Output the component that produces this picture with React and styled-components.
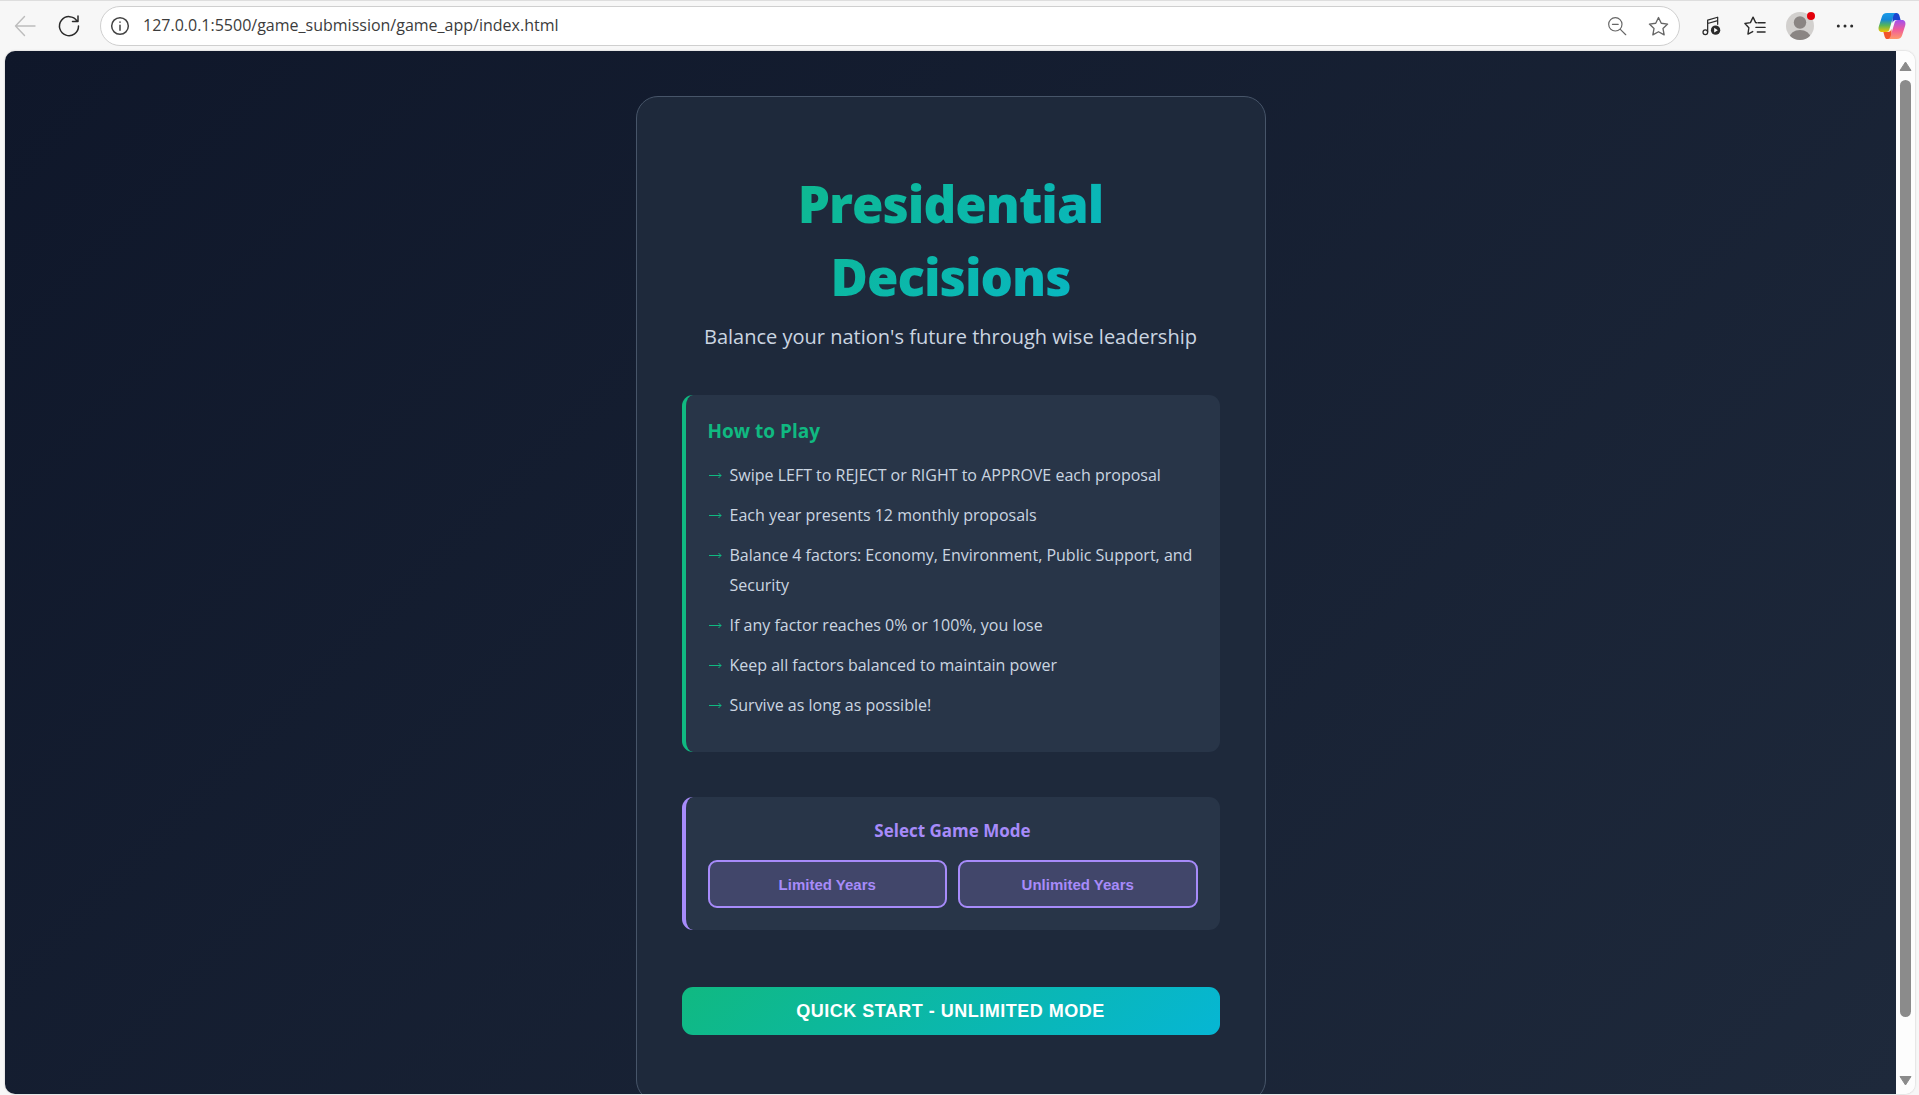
import React from "react";
import styled, { createGlobalStyle } from "styled-components";

const ui = '"Open Sans", "Noto Sans", sans-serif';
const btn = '"Liberation Sans", Arial, sans-serif';

const Global = createGlobalStyle`
  * { box-sizing: border-box; }
  body { margin: 0; background: #f7f7f7; font-family: ${ui}; }
  h1, h2, p, ul { margin: 0; padding: 0; }
`;

const Browser = styled.div`
  height: 100vh;
  display: flex;
  flex-direction: column;
  background: #f7f7f7;
`;

const Toolbar = styled.header`
  display: flex;
  align-items: center;
  height: 51px;
  padding: 0 2px 0 4px;
  border-top: 1px solid #dedede;
  flex: none;
`;

const IconButton = styled.button`
  width: ${(p) => p.$w || 44}px;
  height: 40px;
  padding: 0;
  border: 0;
  background: none;
  display: grid;
  place-items: center;
  flex: none;
  color: ${(p) => p.$color || "#2b2b2b"};
`;

const AddressBar = styled.form`
  flex: 1;
  height: 40px;
  display: flex;
  align-items: center;
  margin: 0 9px 0 8px;
  border: 1px solid #cfcfcf;
  border-radius: 20px;
  background: #fff;
`;

const UrlInput = styled.input`
  flex: 1;
  min-width: 0;
  border: 0;
  outline: 0;
  padding: 0 0 2px 4px;
  background: none;
  font: 16px ${ui};
  color: #3c3c3c;
`;

const Frame = styled.div`
  flex: 1;
  min-height: 0;
  display: flex;
  margin: 0 4px 1px 5px;
  border-radius: 10px;
  overflow: hidden;
  background: #fff;
  box-shadow: 0 0 2px #bbb;
`;

const Page = styled.main`
  flex: 1;
  min-width: 0;
  overflow: hidden;
  display: flex;
  justify-content: center;
  align-items: flex-start;
  padding: 45px 16px;
  background: linear-gradient(135deg, #0f172a 0%, #1e293b 100%);
`;

const ScrollTrack = styled.div`
  width: 19px;
  flex: none;
  display: flex;
  flex-direction: column;
  align-items: center;
  justify-content: space-between;
  padding: 10px 0 8px;
  background: #fdfdfd;
`;

const ScrollThumb = styled.div`
  flex: 1;
  width: 11px;
  margin: 8px 0 58px;
  border-radius: 6px;
  background: #8b8b8b;
`;

const Card = styled.section`
  width: 100%;
  max-width: 630px;
  flex: none;
  padding: 70px 45px 66px;
  border: 1px solid #475569;
  border-radius: 22px;
  background: #1e293b;
`;

const Title = styled.h1`
  font-size: 51px;
  line-height: 73px;
  font-weight: 800;
  letter-spacing: -1px;
  text-align: center;
  color: transparent;
  background: linear-gradient(135deg, #10b981, #06b6d4);
  background-clip: text;
  -webkit-background-clip: text;
`;

const Subtitle = styled.p`
  margin: 5px 0 39px;
  font-size: 20px;
  line-height: 38px;
  text-align: center;
  color: #cbd5e1;
`;

const Panel = styled.section`
  padding: 22px;
  border-left: 4px solid ${(p) => p.$accent};
  border-radius: 11px;
  background: #283548;
  margin-bottom: ${(p) => p.$gap}px;
`;

const PanelTitle = styled.h2`
  font-size: ${(p) => p.$size}px;
  line-height: ${(p) => p.$line}px;
  font-weight: 700;
  color: ${(p) => p.$color};
  text-align: ${(p) => p.$align || "left"};
  margin-bottom: ${(p) => p.$gap}px;
`;

const Rules = styled.ul`
  list-style: none;
  && { padding-bottom: 5px; }
`;

const Rule = styled.li`
  display: flex;
  gap: 8px;
  padding: 5px 0;
  font-size: 16px;
  line-height: 30px;
  color: #cbd5e1;
`;

const Arrow = styled.span`
  width: 14px;
  flex: none;
  display: flex;
  align-items: center;
  height: 30px;
  color: #10b981;
`;

const Modes = styled.div`
  display: grid;
  grid-template-columns: 1fr 1fr;
  gap: 11px;
`;

const ModeButton = styled.button`
  height: 48px;
  border: 2px solid #a78bfa;
  border-radius: 9px;
  background: #41466a;
  color: #a78bfa;
  font: 700 15px ${btn};
`;

const StartButton = styled.button`
  display: block;
  width: 100%;
  height: 48px;
  border: 0;
  border-radius: 11px;
  background: linear-gradient(135deg, #10b981, #06b6d4);
  color: #fff;
  font: 700 18px ${btn};
  letter-spacing: 0.5px;
  text-transform: uppercase;
`;

const Svg = ({ size = 24, children, ...rest }) => (
  <svg width={size} height={size} viewBox="0 0 24 24" fill="none" stroke="currentColor"
    strokeWidth="1.4" strokeLinecap="round" strokeLinejoin="round" aria-hidden="true" {...rest}>
    {children}
  </svg>
);

const star = "M12 2.6l2.9 6 6.6 .9-4.8 4.6 1.2 6.6-5.9-3.2-5.9 3.2 1.2-6.6L2.5 9.5l6.600-.9z";

const RULES = [
  "Swipe LEFT to REJECT or RIGHT to APPROVE each proposal",
  "Each year presents 12 monthly proposals",
  "Balance 4 factors: Economy, Environment, Public Support, and Security",
  "If any factor reaches 0% or 100%, you lose",
  "Keep all factors balanced to maintain power",
  "Survive as long as possible!",
];

function CopilotLogo() {
  return (
    <svg width="28" height="28" viewBox="0 0 28 28" aria-hidden="true">
      <defs>
        <linearGradient id="cpA" x1="0" y1="0" x2="0" y2="1">
          <stop offset="0" stopColor="#1a9be8" />
          <stop offset=".35" stopColor="#1688d8" />
          <stop offset=".65" stopColor="#56b55a" />
          <stop offset="1" stopColor="#f3c500" />
        </linearGradient>
        <linearGradient id="cpB" x1="0" y1="0" x2="0" y2="1">
          <stop offset="0" stopColor="#a050f0" />
          <stop offset=".5" stopColor="#ef5b9c" />
          <stop offset="1" stopColor="#ff9a6a" />
        </linearGradient>
      </defs>
      <path d="M14 1h4.500c1.600 0 2.400 1 2.900 2.600L22.600 8H18c-2 0-2.800 1-3.400 3z" fill="#1b45cf" />
      <path d="M14 27H9.500c-1.600 0-2.400-1-2.900-2.600L5.400 20H10c2 0 2.800-1 3.400-3z" fill="#f2552c" />
      <path d="M9 1h9c-1.500 .3-2.200 1.600-2.700 3.200l-3.700 12.600C11 19 10.200 20 8 20H4C1 20 0 17.500 .8 14.500L3.800 5C4.600 2.500 6 1 9 1z" fill="url(#cpA)" />
      <path d="M19 27h-9c1.500-.3 2.200-1.600 2.700-3.200l3.700-12.600C17 9 17.800 8 20 8h4c3 0 4 2.500 3.200 5.500L24.200 23c-.8 2.500-2.200 4-5.200 4z" fill="url(#cpB)" />
    </svg>
  );
}

export default function App() {
  return (
    <Browser>
      <Global />
      <Toolbar>
        <IconButton aria-label="Back" $color="#bdbdbd" $w={42}>
          <Svg size={24}><path d="M22 12H2.500M11.500 2.500L2.500 12l9 9.500" /></Svg>
        </IconButton>
        <IconButton aria-label="Refresh" $w={46}>
          <Svg size={24} strokeWidth="1.500"><path d="M20 7A9.500 9.500 0 1 0 21.500 12M21 2v5.500h-5.500" /></Svg>
        </IconButton>
        <AddressBar onSubmit={(e) => e.preventDefault()}>
          <IconButton type="button" aria-label="Site information" $w={38} $color="#444">
            <Svg size={20} strokeWidth="1.800"><circle cx="12" cy="12" r="10" /><path d="M12 11v6M12 7.200v.3" /></Svg>
          </IconButton>
          <UrlInput aria-label="Address" defaultValue="127.0.0.1:5500/game_submission/game_app/index.html" />
          <IconButton type="button" aria-label="Zoom" $w={40} $color="#666">
            <Svg size={20}><circle cx="10" cy="10" r="8" /><path d="M16 16l6.500 6.500M6.500 10h7" /></Svg>
          </IconButton>
          <IconButton type="button" aria-label="Add to favorites" $w={42} $color="#666">
            <Svg size={23}><path d={star} /></Svg>
          </IconButton>
        </AddressBar>
        <IconButton aria-label="Media">
          <Svg size={20} strokeWidth="1.500"><path d="M8 19V5L20 1.500V10M8 9L20 5.500" /><circle cx="5.200" cy="19.500" r="2.800" /><circle cx="17.500" cy="17" r="5.600" fill="currentColor" stroke="none" /><path d="M15.800 14.200v5.600l4.400-2.800z" fill="#fff" stroke="none" /></Svg>
        </IconButton>
        <IconButton aria-label="Favorites">
          <Svg size={22} strokeWidth="1.500"><path d="M14 8.500l-1.300-.2L9.900 2.300 7 8.300l-6 1 4.300 4.600-1 6.900 5.200-2.700M15.500 8.500H23M13 13.500h10M14.500 18.500H23" /></Svg>
        </IconButton>
        <IconButton aria-label="Profile" $w={46}>
          <svg width="32" height="32" viewBox="0 0 32 32" aria-hidden="true">
            <clipPath id="av"><circle cx="16" cy="16" r="14" /></clipPath>
            <circle cx="16" cy="16" r="14" fill="#d2d0ce" />
            <circle cx="16" cy="12.500" r="6.200" fill="#8a8583" />
            <ellipse cx="16" cy="28" rx="10.500" ry="8" fill="#8a8583" clipPath="url(#av)" />
            <circle cx="27" cy="6" r="4" fill="#e3000b" />
          </svg>
        </IconButton>
        <IconButton aria-label="More">
          <Svg size={20} fill="currentColor" stroke="none"><circle cx="4" cy="12" r="1.800" /><circle cx="12" cy="12" r="1.800" /><circle cx="20" cy="12" r="1.800" /></Svg>
        </IconButton>
        <IconButton aria-label="Copilot" $w={50}><CopilotLogo /></IconButton>
      </Toolbar>
      <Frame>
        <Page>
          <Card>
            <Title>Presidential Decisions</Title>
            <Subtitle>Balance your nation's future through wise leadership</Subtitle>
            <Panel $accent="#10b981" $gap={45}>
              <PanelTitle $size={19} $line={28} $gap={10} $color="#10b981">How to Play</PanelTitle>
              <Rules>
                {RULES.map((r) => (
                  <Rule key={r}>
                    <Arrow>
                      <svg width="14" height="8" viewBox="0 0 14 8" fill="none" stroke="currentColor" aria-hidden="true"><path d="M1 4.500h12M10.500 2l2.500 2.500L10.500 7" /></svg>
                    </Arrow>
                    {r}
                  </Rule>
                ))}
              </Rules>
            </Panel>
            <Panel $accent="#a78bfa" $gap={57}>
              <PanelTitle $size={17} $line={24} $gap={17} $color="#a78bfa" $align="center">Select Game Mode</PanelTitle>
              <Modes>
                <ModeButton>Limited Years</ModeButton>
                <ModeButton>Unlimited Years</ModeButton>
              </Modes>
            </Panel>
            <StartButton>Quick Start - Unlimited Mode</StartButton>
          </Card>
        </Page>
        <ScrollTrack aria-hidden="true">
          <svg width="13" height="11" viewBox="0 0 13 11"><path d="M6.500 1L12 9.500H1z" fill="#8b8b8b" stroke="#8b8b8b" strokeLinejoin="round" /></svg>
          <ScrollThumb />
          <svg width="13" height="11" viewBox="0 0 13 11"><path d="M6.500 10L12 1.500H1z" fill="#8b8b8b" stroke="#8b8b8b" strokeLinejoin="round" /></svg>
        </ScrollTrack>
      </Frame>
    </Browser>
  );
}
